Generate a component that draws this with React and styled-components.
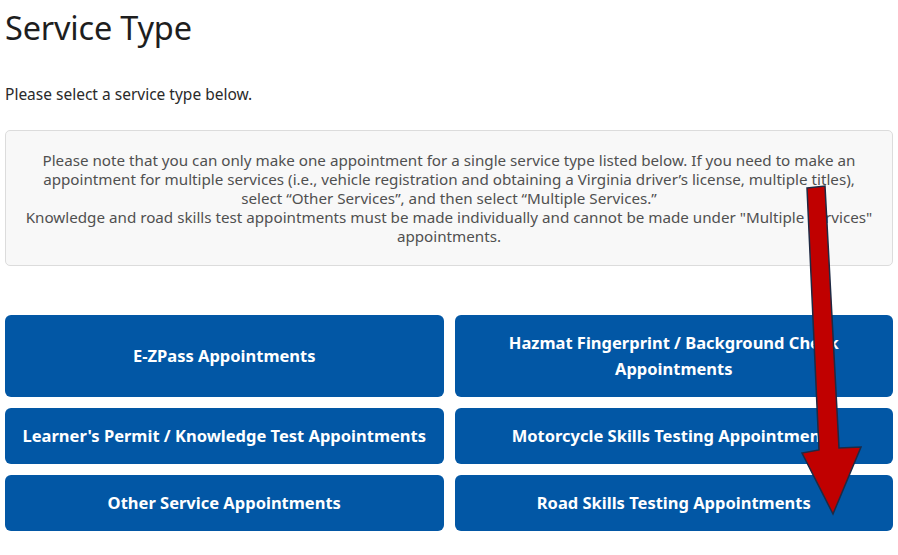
import React from "react";
import styled, { createGlobalStyle } from "styled-components";

const GlobalStyle = createGlobalStyle`
  html, body {
    margin: 0;
    padding: 0;
    background: #fff;
  }
  body {
    font-family: "Noto Sans", "Liberation Sans", sans-serif;
  }
`;

const Page = styled.div`
  position: relative;
  padding: 0 5px;
  width: 898px;
  height: 555px;
  box-sizing: border-box;
  overflow: hidden;
`;

const Title = styled.h1`
  margin: 0;
  padding-top: 8px;
  font-size: 32.5px;
  line-height: 40px;
  font-weight: 400;
  color: #1e1e1e;
  letter-spacing: -0.2px;
`;

const Intro = styled.p`
  margin: 36px 0 0;
  font-size: 15.5px;
  line-height: 20px;
  color: #2a2a2a;
`;

const Notice = styled.div`
  margin-top: 26px;
  height: 136px;
  box-sizing: border-box;
  padding: 20px 18px 0;
  background: #f8f8f8;
  border: 1px solid #dcdcdc;
  border-radius: 5px;
  text-align: center;
  font-size: 15.2px;
  line-height: 19px;
  color: #505050;
`;

const Grid = styled.div`
  margin-top: 49px;
  display: grid;
  grid-template-columns: 1fr 1fr;
  gap: 11px;
`;

const ServiceButton = styled.button`
  display: flex;
  align-items: center;
  justify-content: center;
  padding: 15px 10px;
  min-height: ${({ $tall }) => ($tall ? "82px" : "56px")};
  box-sizing: border-box;
  border: none;
  border-radius: 6px;
  background: #0257a5;
  color: #fff;
  font-family: inherit;
  font-size: 16.5px;
  line-height: 26px;
  font-weight: 700;
  text-align: center;
  cursor: pointer;
`;

const Arrow = styled.svg`
  position: absolute;
  left: 0;
  top: 0;
  pointer-events: none;
`;

const services = [
  { label: "E-ZPass Appointments", tall: true },
  { label: "Hazmat Fingerprint / Background Check Appointments", tall: true },
  { label: "Learner's Permit / Knowledge Test Appointments" },
  { label: "Motorcycle Skills Testing Appointments" },
  { label: "Other Service Appointments" },
  { label: "Road Skills Testing Appointments" },
];

export default function App() {
  return (
    <Page>
      <GlobalStyle />
      <Title>Service Type</Title>
      <Intro>Please select a service type below.</Intro>
      <Notice>
        Please note that you can only make one appointment for a single service
        type listed below. If you need to make an appointment for multiple
        services (i.e., vehicle registration and obtaining a Virginia driver’s
        license, multiple titles), select “Other Services”, and then select
        “Multiple Services.”
        <br />
        Knowledge and road skills test appointments must be made individually
        and cannot be made under "Multiple Services" appointments.
      </Notice>
      <Grid>
        {services.map((s) => (
          <ServiceButton key={s.label} $tall={s.tall}>
            {s.label}
          </ServiceButton>
        ))}
      </Grid>
      <Arrow width="898" height="555" viewBox="0 0 898 555">
        <polygon
          points="807,188 825,186 839,448 861,447 833,514 802,453 819,450"
          fill="#c00000"
          stroke="#1f2a44"
          strokeWidth="1.5"
          strokeLinejoin="miter"
        />
      </Arrow>
    </Page>
  );
}
